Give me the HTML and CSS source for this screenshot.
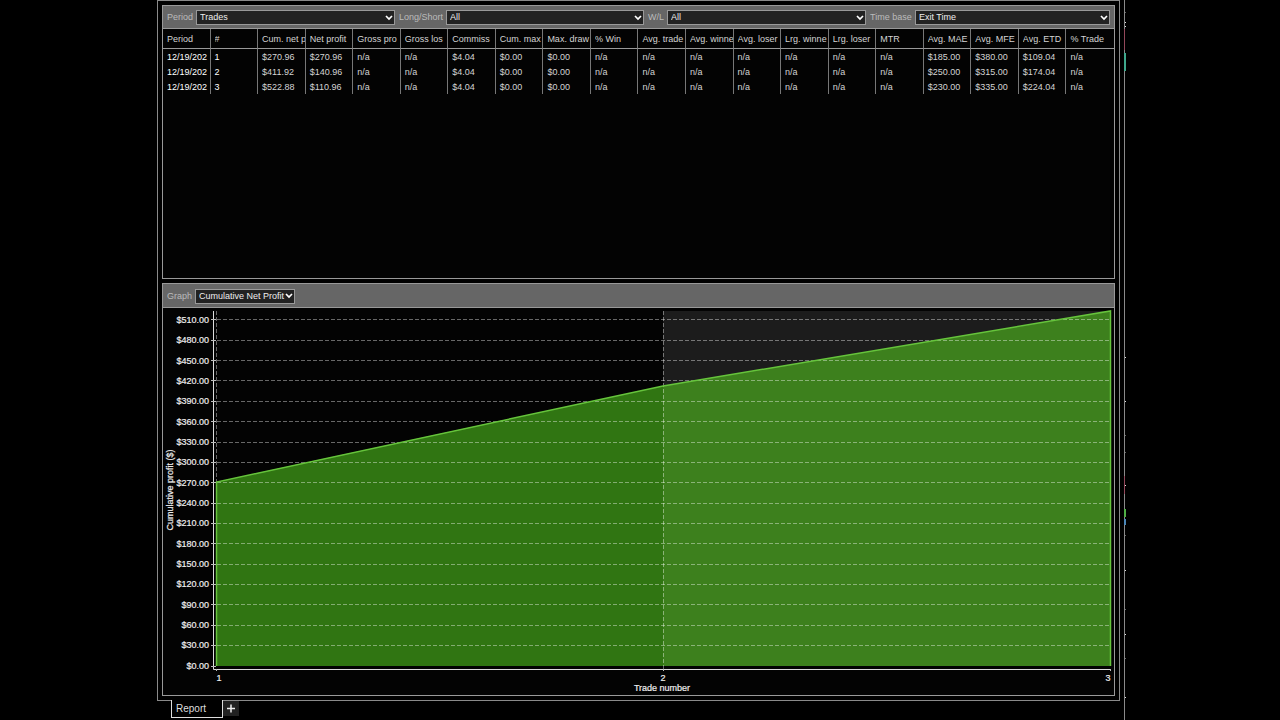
FILE: index.html
```
<!DOCTYPE html>
<html lang="en">
<head>
  <meta charset="UTF-8">
  <meta name="viewport" content="width=device-width, initial-scale=1.0">
  <title>Trade Performance</title>
  <link rel="stylesheet" href="styles.css">
</head>
<body>
  <div class="app">
    <main class="window">
      <div class="frame">
        <section class="panel">
          <form class="toolbar filters">
            <label for="period">Period</label>
            <select id="period"><option>Trades</option></select>
            <label for="side">Long/Short</label>
            <select id="side"><option>All</option></select>
            <label for="wl">W/L</label>
            <select id="wl"><option>All</option></select>
            <label for="timebase">Time base</label>
            <select id="timebase"><option>Exit Time</option></select>
          </form>
          <table class="trades">
            <thead>
              <tr>
                <th><div>Period</div></th><th><div>#</div></th><th><div>Cum. net p</div></th><th><div>Net profit</div></th>
                <th><div>Gross pro</div></th><th><div>Gross los</div></th><th><div>Commiss</div></th><th><div>Cum. max</div></th>
                <th><div>Max. draw</div></th><th><div>% Win</div></th><th><div>Avg. trade</div></th><th><div>Avg. winne</div></th>
                <th><div>Avg. loser</div></th><th><div>Lrg. winne</div></th><th><div>Lrg. loser</div></th><th><div>MTR</div></th>
                <th><div>Avg. MAE</div></th><th><div>Avg. MFE</div></th><th><div>Avg. ETD</div></th><th><div>% Trade</div></th>
              </tr>
            </thead>
            <tbody>
              <tr>
                <td class="key"><div>12/19/202</div></td><td class="key">1</td><td>$270.96</td><td>$270.96</td>
                <td>n/a</td><td>n/a</td><td>$4.04</td><td>$0.00</td>
                <td>$0.00</td><td>n/a</td><td>n/a</td><td>n/a</td>
                <td>n/a</td><td>n/a</td><td>n/a</td><td>n/a</td>
                <td>$185.00</td><td>$380.00</td><td>$109.04</td><td>n/a</td>
              </tr>
              <tr>
                <td class="key"><div>12/19/202</div></td><td class="key">2</td><td>$411.92</td><td>$140.96</td>
                <td>n/a</td><td>n/a</td><td>$4.04</td><td>$0.00</td>
                <td>$0.00</td><td>n/a</td><td>n/a</td><td>n/a</td>
                <td>n/a</td><td>n/a</td><td>n/a</td><td>n/a</td>
                <td>$250.00</td><td>$315.00</td><td>$174.04</td><td>n/a</td>
              </tr>
              <tr>
                <td class="key"><div>12/19/202</div></td><td class="key">3</td><td>$522.88</td><td>$110.96</td>
                <td>n/a</td><td>n/a</td><td>$4.04</td><td>$0.00</td>
                <td>$0.00</td><td>n/a</td><td>n/a</td><td>n/a</td>
                <td>n/a</td><td>n/a</td><td>n/a</td><td>n/a</td>
                <td>$230.00</td><td>$335.00</td><td>$224.04</td><td>n/a</td>
              </tr>
            </tbody>
          </table>
        </section>

        <section class="panel">
          <form class="toolbar graph-bar">
            <label for="graph">Graph</label>
            <select id="graph"><option>Cumulative Net Profit</option></select>
          </form>
          <svg class="chart" viewBox="0 0 951 387" role="img" aria-label="Cumulative net profit by trade number">
            <rect x="500" y="3" width="448" height="355" fill="#1c1c1c"/>
            <!-- area -->
            <path d="M53 174L500 78V358H53Z" fill="#307512"/>
            <path d="M500 78L948 3V358H500Z" fill="#3d801d"/>
            <!-- grid -->
            <path class="grid" d="M54 11.5H947M54 32.5H947M54 52.5H947M54 72.5H947M54 93.5H947M54 113.5H947M54 134.5H947M54 154.5H947M54 174.5H947M54 195.5H947M54 215.5H947M54 235.5H947M54 256.5H947M54 276.5H947M54 296.5H947M54 317.5H947M54 337.5H947"/>
            <path class="grid" d="M53.5 3V174M500.5 3V361"/>
            <path d="M53.5 358V174L500 78L947.5 3V358" fill="none" stroke="#66c43c" stroke-width="1.5"/>
            <!-- axes and ticks -->
            <path class="axis" d="M50.5 3V361.5H948"/>
            <path class="tick" d="M48 11.5h5M48 32.5h5M48 52.5h5M48 72.5h5M48 93.5h5M48 113.5h5M48 134.5h5M48 154.5h5M48 174.5h5M48 195.5h5M48 215.5h5M48 235.5h5M48 256.5h5M48 276.5h5M48 296.5h5M48 317.5h5M48 337.5h5M48 358.5h5M53.5 361v2M500.5 361v2M947.5 361v2"/>
            <g class="ylabels">
              <text x="46" y="15">$510.00</text>
              <text x="46" y="35">$480.00</text>
              <text x="46" y="56">$450.00</text>
              <text x="46" y="76">$420.00</text>
              <text x="46" y="96">$390.00</text>
              <text x="46" y="117">$360.00</text>
              <text x="46" y="137">$330.00</text>
              <text x="46" y="157">$300.00</text>
              <text x="46" y="178">$270.00</text>
              <text x="46" y="198">$240.00</text>
              <text x="46" y="218">$210.00</text>
              <text x="46" y="239">$180.00</text>
              <text x="46" y="259">$150.00</text>
              <text x="46" y="279">$120.00</text>
              <text x="46" y="300">$90.00</text>
              <text x="46" y="320">$60.00</text>
              <text x="46" y="340">$30.00</text>
              <text x="46" y="361">$0.00</text>
            </g>
            <g class="xlabels">
              <text x="56" y="373">1</text>
              <text x="500" y="373">2</text>
              <text x="945" y="373">3</text>
              <text x="499" y="383">Trade number</text>
              <text transform="translate(10 182) rotate(-90)">Cumulative profit ($)</text>
            </g>
          </svg>
        </section>
      </div>
      <nav class="tabs">
        <a class="tab" href="#report">Report</a>
        <button class="add" type="button" aria-label="Add tab">
          <svg viewBox="0 0 16 15"><path d="M4 7.5h8M8 3.5v8" stroke="#eee" stroke-width="1.5"/></svg>
        </button>
      </nav>
    </main>
    <!-- sliver of the window behind -->
    <svg class="edge" viewBox="0 0 2 720" preserveAspectRatio="none" aria-hidden="true">
      <path d="M.5 0V720" stroke="#8a8a8a"/>
      <path d="M.5 29v21M.5 476v18" stroke="#93485a"/>
      <path d="M1 53v18" stroke="#3fa88c" stroke-width="2"/>
      <path d="M1 509v8" stroke="#4fae45" stroke-width="2"/>
      <path d="M1 519v6" stroke="#4a86b8" stroke-width="2"/>
      <path d="M1 357.5h1M1 401.5h1M1 485.5h1M1 570.5h1M1 634.5h1M1 697.5h1M1 22.5h1M1 26.5h1" stroke="#ddd"/>
      <path d="M1 12.5h1M1 435.5h1M1 452.5h1M1 535.5h1M1 609.5h1M1 658.5h1" stroke="#666"/>
    </svg>
  </div>
</body>
</html>
```

FILE: styles.css
```
* {
  box-sizing: border-box;
}
body {
  margin: 0;
  background: #000;
  color: #d4d4d4;
  font: 9px/15px "Liberation Sans", Arial, sans-serif;
}
.app {
  display: flex;
  min-height: 100vh;
  padding: 0 154px 0 157px;
}
.window {
  display: flex;
  flex: 1;
  flex-direction: column;
  min-width: 0;
  padding-right: 4px;
}
.frame {
  display: grid;
  flex: 1;
  grid-template-rows: 274fr 413fr;
  gap: 4px;
  padding: 4px;
  border: 1px solid #8a8a8a;
}
.panel {
  display: flex;
  flex-direction: column;
  min-width: 0;
  min-height: 0;
  border: 1px solid #999;
  background: #030303;
}

/* toolbars */
.toolbar {
  display: grid;
  align-items: center;
  column-gap: 4px;
  padding: 1px 4px 0;
  border-bottom: 1px solid #999;
  background: #666;
  color: #bbb;
  white-space: nowrap;
}
.filters {
  grid-template-columns: 25px 199fr 43px 198fr 15px 199fr 41px 195fr;
  height: 23px;
}
.graph-bar {
  grid-template-columns: 24px 100px;
  height: 24px;
}
select {
  appearance: none;
  width: 100%;
  height: 15px;
  margin: 0;
  padding: 0 9px 0 3px;
  border: 1px solid #999;
  border-radius: 0;
  background: #222 url("data:image/svg+xml,%3Csvg xmlns='http://www.w3.org/2000/svg' width='8' height='6'%3E%3Cpath d='M1 1l3 3 3-3' fill='none' stroke='white' stroke-width='1.7'/%3E%3C/svg%3E") no-repeat right 1px center;
  color: #eee;
  font: inherit;
  line-height: 13px;
}

/* trades table */
.trades {
  width: 100%;
  table-layout: fixed;
  border-collapse: separate;
  border-spacing: 0;
}
th,
td {
  height: 15px;
  padding: 2px 0 0 4px;
  border-right: 1px solid #777;
  font-weight: normal;
  line-height: 13px;
  text-align: left;
  white-space: nowrap;
}
th {
  height: 20px;
  border-bottom: 1px solid #999;
}
th:last-child,
td:last-child {
  border-right: 0;
}
th div,
td div {
  overflow: hidden;
}
.key {
  color: #fff;
}

/* chart */
.chart {
  display: block;
  flex: 1;
  width: 100%;
  min-height: 0;
}
.grid {
  fill: none;
  stroke: #fff;
  stroke-dasharray: 4 2;
  stroke-opacity: 0.4;
}
.axis {
  fill: none;
  stroke: #ddd;
}
.tick {
  stroke: #bbb;
}
.chart text {
  fill: #eee;
  stroke: #eee;
  stroke-width: 0.2px;
}
.ylabels {
  text-anchor: end;
}
.xlabels {
  text-anchor: middle;
}

/* bottom tabs */
.tabs {
  display: flex;
  height: 19px;
  padding-left: 14px;
}
.tab {
  z-index: 1;
  width: 52px;
  height: 18px;
  margin-top: -1px;
  padding: 1px 0 0 4px;
  border: 1px solid #ddd;
  border-top: 0;
  background: #000;
  color: #ddd;
  font-size: 10px;
  line-height: 16px;
  text-decoration: none;
}
.add {
  width: 16px;
  height: 15px;
  margin: 0;
  padding: 0;
  border: 0;
  background: #222;
}
.add svg {
  display: block;
}
.edge {
  flex: none;
  align-self: stretch;
  width: 2px;
}
```
